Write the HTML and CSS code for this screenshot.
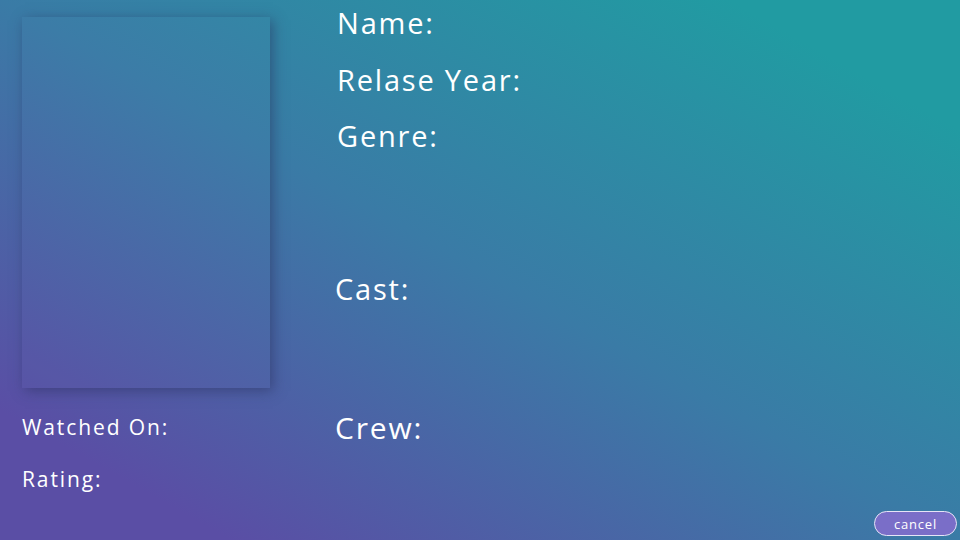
FILE: index.html
```html
<!DOCTYPE html>
<html>
<head>
<meta charset="utf-8">
<link rel="stylesheet" href="styles.css">
</head>
<body>
<div class="page">
  <div class="left">
    <div class="poster"></div>
    <div class="meta watched">Watched On:</div>
    <div class="meta rating">Rating:</div>
  </div>
  <div class="right">
    <div class="field name">Name:</div>
    <div class="field year">Relase Year:</div>
    <div class="field genre">Genre:</div>
    <div class="field cast">Cast:</div>
    <div class="field crew">Crew:</div>
  </div>
  <button class="cancel">cancel</button>
</div>
</body>
</html>
```
FILE: styles.css
```css
html, body {
  margin: 0;
  padding: 0;
  width: 960px;
  height: 540px;
  overflow: hidden;
}
body {
  font-family: "Open Sans", "Liberation Sans", sans-serif;
  color: #ffffff;
  background: linear-gradient(to top right, #5a4ea5 12%, #3a7ba6 50%, #219ba2 88%);
}
.page {
  position: relative;
  width: 960px;
  height: 540px;
  display: flex;
}
.left {
  width: 315px;
  padding: 17px 0 0 22px;
  box-sizing: border-box;
  display: flex;
  flex-direction: column;
}
.poster {
  width: 248px;
  height: 371px;
  box-shadow: 3px 3px 12px rgba(40, 45, 90, 0.5);
  background: rgba(255, 255, 255, 0.01);
}
.meta {
  font-size: 21px;
  letter-spacing: 1.9px;
  line-height: 30px;
}
.watched { margin-top: 24px; }
.rating { margin-top: 22px; }
.right {
  display: flex;
  flex-direction: column;
  padding-left: 22px;
}
.field {
  font-size: 29px;
  letter-spacing: 1.8px;
  line-height: 40px;
}
.name { margin-top: 3px; }
.year { margin-top: 17px; }
.genre { margin-top: 16px; }
.cast { margin-top: 113px; margin-left: -2px; }
.crew { margin-top: 99px; margin-left: -2px; font-size: 30px; }
.cancel {
  position: absolute;
  right: 3px;
  bottom: 4px;
  width: 83px;
  height: 25px;
  border: 1px solid #e6e4f7;
  border-radius: 13px;
  background: #7a6ec8;
  color: #ffffff;
  font-family: "Open Sans", "Liberation Sans", sans-serif;
  font-size: 13px;
  letter-spacing: 0.8px;
  padding: 0;
  line-height: 22px;
}
```
